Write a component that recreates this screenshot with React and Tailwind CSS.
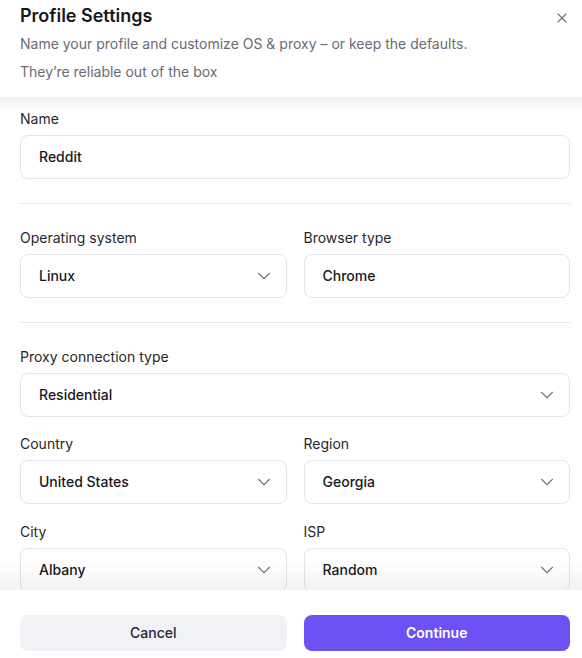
import { X, ChevronDown } from "lucide-react";

const Field = ({ label, value, select, className = "" }) => (
  <div className={"flex flex-col " + className}>
    <label className="text-sm leading-5 text-[#27272a] mb-[6px]">{label}</label>
    <div className="h-[44px] flex items-center justify-between border border-[#e4e4ea] rounded-lg pl-[18px] pr-[11px] bg-white">
      <span className="text-sm font-medium text-[#18181b]">{value}</span>
      {select && <ChevronDown size={22} strokeWidth={1.2} className="text-[#74747c]" />}
    </div>
  </div>
);

const App = () => {
  return (
    <div className="h-[658px] w-[582px] flex flex-col bg-white overflow-hidden font-['Inter',sans-serif]">
      <div className="relative z-10 pl-5 pr-3 pt-[2px] pb-[15px] bg-white">
        <div className="flex items-center justify-between">
          <h1 className="text-lg leading-7 font-semibold text-[#18181b]">Profile Settings</h1>
          <button className="text-[#71717a] mt-[4px]">
            <X size={16} strokeWidth={1.6} />
          </button>
        </div>
        <p className="text-sm leading-5 text-[#6b6b73] mt-1">
          Name your profile and customize OS &amp; proxy – or keep the defaults.
        </p>
        <p className="text-sm leading-5 text-[#6b6b73] mt-2">They’re reliable out of the box</p>
      </div>

      <div className="relative flex-1 overflow-hidden">
        <div className="absolute inset-x-0 top-0 h-[14px] bg-gradient-to-b from-black/[0.06] to-transparent pointer-events-none z-10" />
        <div className="pl-5 pr-3 pt-3">
          <Field label="Name" value="Reddit" />
          <div className="h-px bg-[#e7e7ec] mt-6 mb-6" />
          <div className="grid grid-cols-2 gap-[17px]">
            <Field label="Operating system" value="Linux" select />
            <Field label="Browser type" value="Chrome" />
          </div>
          <div className="h-px bg-[#e7e7ec] mt-6 mb-6" />
          <Field label="Proxy connection type" value="Residential" select />
          <div className="grid grid-cols-2 gap-x-[17px] gap-y-[18px] mt-[17px]">
            <Field label="Country" value="United States" select />
            <Field label="Region" value="Georgia" select />
            <Field label="City" value="Albany" select />
            <Field label="ISP" value="Random" select />
          </div>
        </div>
        <div className="absolute inset-x-0 bottom-0 h-[28px] bg-gradient-to-t from-black/[0.05] to-transparent pointer-events-none" />
      </div>

      <div className="h-[68px] pl-5 pr-3 pt-[25px] grid grid-cols-2 gap-[17px] bg-white">
        <button className="h-9 rounded-lg bg-[#f1f2f6] text-sm font-medium text-[#27272a]">Cancel</button>
        <button className="h-9 rounded-lg bg-[#6d51f2] text-sm font-semibold text-white">Continue</button>
      </div>
    </div>
  );
};

export default App;
